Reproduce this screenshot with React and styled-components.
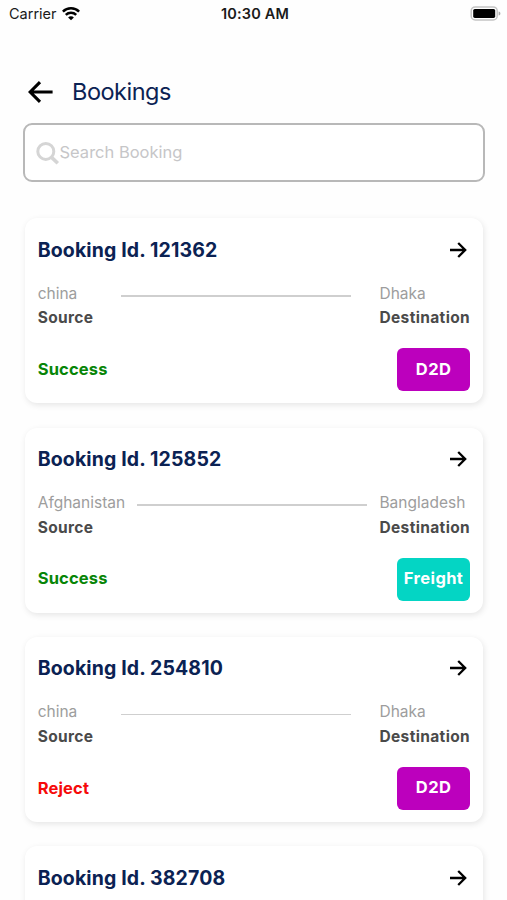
import styled, { createGlobalStyle } from "styled-components";

const GlobalStyle = createGlobalStyle`
  * {
    box-sizing: border-box;
  }

  body {
    margin: 0;
    background: #fefefe;
    font-family: Inter, "Liberation Sans", sans-serif;
  }
`;

const Screen = styled.div`
  display: flex;
  flex-direction: column;
  height: 900px;
  overflow: hidden;
`;

const StatusBar = styled.div`
  display: grid;
  grid-template-columns: 1fr auto 1fr;
  align-items: center;
  flex: none;
  height: 27px;
  padding: 0 6px 0 9px;
  color: #1a1a1a;
`;

const Carrier = styled.div`
  display: flex;
  align-items: center;
  gap: 5px;
  font-size: 14.5px;
`;

const Time = styled.div`
  font-size: 14.5px;
  font-weight: 600;
  letter-spacing: 0.15px;
`;

const BatteryIcon = styled.svg`
  justify-self: end;
`;

const Header = styled.header`
  display: flex;
  align-items: center;
  flex: none;
  gap: 19.5px;
  height: 44px;
  margin-top: 42.5px;
  padding: 0 27.5px;
`;

const Title = styled.h1`
  margin: 0;
  color: #0b2253;
  font-size: 23.5px;
  font-weight: 400;
  letter-spacing: -0.5px;
`;

const SearchBox = styled.label`
  display: flex;
  align-items: center;
  flex: none;
  height: 59px;
  margin: 9.5px 22px 0 22.5px;
  padding-left: 11px;
  border: 2px solid #b8b8b8;
  border-radius: 9px;
  background: #fff;
`;

const SearchInput = styled.input`
  flex: 1;
  padding: 0 0 2px;
  border: 0;
  outline: none;
  background: transparent;
  font: inherit;
  font-size: 16.5px;

  &::placeholder {
    color: #c6c6c8;
    opacity: 1;
  }
`;

const List = styled.div`
  display: flex;
  flex: 1;
  flex-direction: column;
  gap: 24.3px;
  min-height: 0;
  padding: 36.3px 24.5px 0;
  overflow-y: auto;
  scrollbar-width: none;
`;

const Card = styled.article`
  flex: none;
  height: 185px;
  padding: 12.4px 13.2px;
  border-radius: 12px;
  background: #fff;
  box-shadow: 1px 2px 6px rgba(0, 0, 0, 0.1);
`;

const CardHeader = styled.div`
  display: flex;
  align-items: center;
  justify-content: space-between;
  height: 38px;
  padding-right: 2px;
`;

const BookingId = styled.h2`
  margin: 0;
  color: #0b2253;
  font-size: 19.5px;
  font-weight: 650;
  letter-spacing: 0.13px;
`;

const Route = styled.div`
  display: flex;
  justify-content: space-between;
  margin-top: 13.2px;
  margin-right: -0.8px;
`;

const Line = styled.div`
  width: 230px;
  height: 1.5px;
  margin-top: 13.3px;
  background: #cfcfcf;
`;

const Place = styled.div`
  color: #9d9d9d;
  font-size: 15.5px;
  line-height: 24.4px;
`;

const PlaceLabel = styled.div`
  color: #4a4a4a;
  font-size: 15.5px;
  font-weight: 650;
  letter-spacing: 0.36px;
  line-height: 24.4px;
`;

const CardFooter = styled.div`
  display: flex;
  align-items: center;
  justify-content: space-between;
  margin-top: 17.7px;
  margin-right: -1px;
`;

const Status = styled.div`
  padding-bottom: 1.4px;
  color: ${({ $rejected }) => ($rejected ? "#f60a0a" : "#078507")};
  font-size: 16.5px;
  font-weight: 650;
  letter-spacing: 0.15px;
`;

const TypeButton = styled.button`
  width: 73.5px;
  height: 43px;
  padding: 0 0 2px;
  border: 0;
  border-radius: 6px;
  background: ${({ $type }) => ($type === "Freight" ? "#04d5c4" : "#bc00bd")};
  color: #fff;
  font: inherit;
  font-size: 16.5px;
  font-weight: 650;
  letter-spacing: 0.4px;
`;

const bookings = [
  { id: 121362, source: "china", destination: "Dhaka", status: "Success", type: "D2D" },
  { id: 125852, source: "Afghanistan", destination: "Bangladesh", status: "Success", type: "Freight" },
  { id: 254810, source: "china", destination: "Dhaka", status: "Reject", type: "D2D" },
  { id: 382708, source: "china", destination: "Dhaka", status: "Success", type: "D2D" },
];

const Wifi = () => (
  <svg width="18" height="14" viewBox="0 0 18 14" fill="none" stroke="#000" strokeWidth="2.5">
    <path d="M0.9 4.6C5.3 0.2 12.7 0.2 17.1 4.6" />
    <path d="M3.8 7.8C6.7 5 11.3 5 14.2 7.8" />
    <path d="M9 13.3L6.1 10.4C7.7 8.9 10.3 8.9 11.9 10.4Z" fill="#000" stroke="none" />
  </svg>
);

const Battery = () => (
  <BatteryIcon width="31" height="15" viewBox="0 0 31 15">
    <rect x="1.2" y="0.9" width="26" height="13" rx="4" fill="#fff" stroke="#c4c4c4" strokeWidth="1.5" />
    <rect x="3.2" y="2.9" width="22" height="9" rx="1.6" fill="#000" />
    <path d="M28.6 5.4C31 6 31 8.8 28.6 9.4Z" fill="#aaa" />
  </BatteryIcon>
);

const BackArrow = () => (
  <svg width="25" height="22" viewBox="0 0 25 22" fill="none" stroke="#000" strokeWidth="3.1">
    <path d="M12 1.2L2.2 11L12 20.8M2.2 11H24.6" />
  </svg>
);

const ForwardArrow = () => (
  <svg width="17" height="16" viewBox="0 0 17 16" fill="none" stroke="#000" strokeWidth="2.3">
    <path d="M8.2 1L15.2 8L8.2 15M15.2 8H0" />
  </svg>
);

const SearchIcon = () => (
  <svg width="24" height="24" viewBox="0 0 24 24" fill="none" stroke="#d5d5d5" strokeWidth="3">
    <circle cx="9.8" cy="10.4" r="8" />
    <path d="M15.6 16.4L21.8 22.2" strokeWidth="3.6" />
  </svg>
);

const BookingCard = ({ booking }) => (
  <Card>
    <CardHeader>
      <BookingId>Booking Id. {booking.id}</BookingId>
      <ForwardArrow />
    </CardHeader>
    <Route>
      <div>
        <Place>{booking.source}</Place>
        <PlaceLabel>Source</PlaceLabel>
      </div>
      <Line />
      <div>
        <Place>{booking.destination}</Place>
        <PlaceLabel>Destination</PlaceLabel>
      </div>
    </Route>
    <CardFooter>
      <Status $rejected={booking.status === "Reject"}>{booking.status}</Status>
      <TypeButton $type={booking.type}>{booking.type}</TypeButton>
    </CardFooter>
  </Card>
);

const App = () => {
  return (
    <Screen>
      <GlobalStyle />
      <StatusBar>
        <Carrier>
          Carrier
          <Wifi />
        </Carrier>
        <Time>10:30 AM</Time>
        <Battery />
      </StatusBar>
      <Header>
        <BackArrow />
        <Title>Bookings</Title>
      </Header>
      <SearchBox>
        <SearchIcon />
        <SearchInput placeholder="Search Booking" />
      </SearchBox>
      <List>
        {bookings.map((booking) => (
          <BookingCard key={booking.id} booking={booking} />
        ))}
      </List>
    </Screen>
  );
};

export default App;
